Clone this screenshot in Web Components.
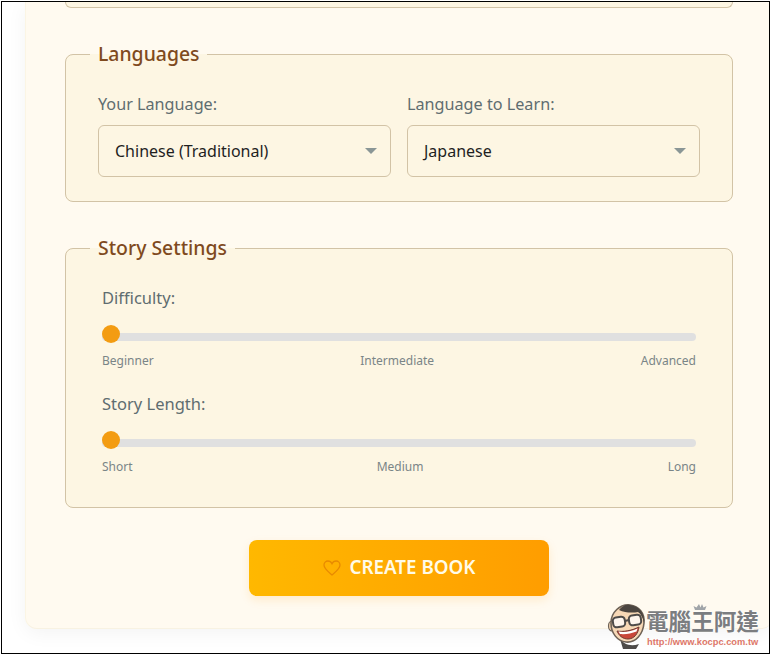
<!DOCTYPE html>
<html>
<head>
<meta charset="utf-8">
<title>Create Book</title>
<style>
  html, body { margin: 0; height: 100%; overflow: hidden; background: #fff; }
  body { font-family: "Noto Sans", sans-serif; padding: 1px; box-sizing: border-box; }
</style>
</head>
<body>
<book-page>
  <settings-group class="cut"></settings-group>
  <settings-group legend="Languages" columns>
    <language-select label="Your Language:" value="Chinese (Traditional)"></language-select>
    <language-select label="Language to Learn:" value="Japanese"></language-select>
  </settings-group>
  <settings-group legend="Story Settings" inset>
    <level-slider label="Difficulty:" a="Beginner" b="Intermediate" c="Advanced"></level-slider>
    <level-slider label="Story Length:" a="Short" b="Medium" c="Long"></level-slider>
  </settings-group>
  <create-button slot="action">CREATE BOOK</create-button>
</book-page>
<site-mark></site-mark>

<script>
class BookPage extends HTMLElement {
  constructor() {
    super();
    const shadow = this.attachShadow({mode: "open"});
    shadow.innerHTML = `
      <style>
        :host {
          display: block;
          box-sizing: border-box;
          width: 769px;
          height: 653px;
          border: 1px solid #000;
          padding-left: 23px;
          overflow: hidden;
        }
        .card {
          box-sizing: border-box;
          width: 748px;
          height: 627px;
          padding: 0 40px 0 39px;
          background: #fffaf0;
          border-left: 1px solid #fbf5e4;
          border-bottom: 1px solid #f8f2e2;
          border-radius: 0 0 12px 12px;
          box-shadow: 0 4px 20px rgba(0, 0, 0, .05);
          display: flex;
          flex-direction: column;
        }
        .groups { display: flex; flex-direction: column; }
        .action { display: flex; justify-content: center; width: 668px; }
      </style>
      <div class="card">
        <div class="groups"><slot></slot></div>
        <div class="action"><slot name="action"></slot></div>
      </div>
    `;
  }
}
customElements.define("book-page", BookPage);

class SettingsGroup extends HTMLElement {
  constructor() {
    super();
    const shadow = this.attachShadow({mode: "open"});
    const legend = this.getAttribute("legend");
    if (!legend) {
      // tail of the fieldset scrolled off the top
      shadow.innerHTML = `
        <style>
          :host {
            display: block;
            box-sizing: border-box;
            width: 668px;
            height: 6px;
            margin-bottom: 33px;
            background: #fdf6e3;
            border: 1px solid #d2c3a6;
            border-top: 0;
            border-radius: 0 0 8px 8px;
          }
        </style>
      `;
      return;
    }
    shadow.innerHTML = `
      <style>
        :host { display: block; width: 668px; margin-bottom: 33px; }
        :host([inset]) { margin-bottom: 32px; }
        fieldset {
          margin: 0;
          padding: 0;
          background: #fdf6e3;
          border: 1px solid #d2c3a6;
          border-radius: 8px;
          min-width: 0;
        }
        legend {
          margin-left: 24px;
          padding: 0 8px 2px;
          font-size: 19.4px;
          font-weight: 500;
          line-height: 25px;
          color: #7f4a1e;
        }
        .body { padding: 25px 32px 24px; }
        :host([columns]) .body { display: grid; grid-template-columns: 1fr 1fr; gap: 16px; }
        :host([inset]) .body { padding: 25px 36px 32px; }
      </style>
      <fieldset>
        <legend>${legend}</legend>
        <div class="body"><slot></slot></div>
      </fieldset>
    `;
  }
}
customElements.define("settings-group", SettingsGroup);

class LanguageSelect extends HTMLElement {
  constructor() {
    super();
    const shadow = this.attachShadow({mode: "open"});
    shadow.innerHTML = `
      <style>
        :host { display: block; }
        .label {
          font-size: 16.2px;
          line-height: 22px;
          color: #5f6d70;
          margin-bottom: 10px;
        }
        .box {
          box-sizing: border-box;
          height: 52px;
          padding: 0 13px 0 16px;
          display: flex;
          align-items: center;
          justify-content: space-between;
          border: 1px solid #d2c3a6;
          border-radius: 6px;
          background: #fdf6e3;
          color: #1f1f1f;
          font-size: 16px;
        }
        svg { display: block; margin-top: -1px; }
      </style>
      <div class="label">${this.getAttribute("label")}</div>
      <div class="box" role="combobox">
        <span>${this.getAttribute("value")}</span>
        <svg width="12" height="6" viewBox="0 0 12 6"><path d="M0 0h12L6 6z" fill="#8a9696"/></svg>
      </div>
    `;
  }
}
customElements.define("language-select", LanguageSelect);

class LevelSlider extends HTMLElement {
  constructor() {
    super();
    const shadow = this.attachShadow({mode: "open"});
    shadow.innerHTML = `
      <style>
        :host { display: block; margin-bottom: 24px; }
        :host(:last-child) { margin-bottom: 0; }
        .label { font-size: 16.5px; line-height: 22px; color: #5f6d70; }
        .track {
          position: relative;
          height: 8px;
          margin-top: 24px;
          border-radius: 4px;
          background: #e0e0e0;
        }
        .thumb {
          position: absolute;
          left: 0;
          top: -8px;
          width: 18px;
          height: 18px;
          border-radius: 50%;
          background: #f39c12;
        }
        .marks {
          display: flex;
          justify-content: space-between;
          margin-top: 12px;
          font-size: 12px;
          line-height: 16px;
          color: #7a8587;
        }
      </style>
      <div class="label">${this.getAttribute("label")}</div>
      <div class="track"><div class="thumb"></div></div>
      <div class="marks">
        <span>${this.getAttribute("a")}</span>
        <span>${this.getAttribute("b")}</span>
        <span>${this.getAttribute("c")}</span>
      </div>
    `;
  }
}
customElements.define("level-slider", LevelSlider);

class CreateButton extends HTMLElement {
  constructor() {
    super();
    const shadow = this.attachShadow({mode: "open"});
    shadow.innerHTML = `
      <style>
        :host { display: block; }
        button {
          box-sizing: border-box;
          width: 300px;
          height: 56px;
          display: flex;
          align-items: center;
          justify-content: center;
          gap: 9px;
          padding: 0 0 2px;
          border: 0;
          border-radius: 8px;
          background: linear-gradient(90deg, #ffb800, #ff9d00);
          box-shadow: 0 4px 10px rgba(255, 152, 0, .15);
          color: #fffbe8;
          font: 600 18.8px "Noto Sans", sans-serif;
        }
        svg { display: block; margin-top: 2px; }
      </style>
      <button>
        <svg width="18" height="16" viewBox="0 0 18 16" fill="none" stroke="#e88a00" stroke-width="1.3">
          <path d="M9 15C5 11.6 1 8.8 1 5.1 1 2.7 2.8 1 4.900 1 6.600 1 8.200 2 9 3.700 9.800 2 11.400 1 13.100 1 15.200 1 17 2.700 17 5.100 17 8.800 13 11.600 9 15Z"/>
        </svg>
        <span><slot></slot></span>
      </button>
    `;
  }
}
customElements.define("create-button", CreateButton);

class SiteMark extends HTMLElement {
  constructor() {
    super();
    const shadow = this.attachShadow({mode: "open"});
    shadow.innerHTML = `
      <style>
        :host { position: absolute; left: 606px; top: 601px; width: 160px; height: 50px; }
        svg { position: absolute; left: 0; top: 0; }
        .name {
          position: absolute;
          left: 40px;
          top: 7px;
          font: 700 22.6px/26px "Noto Sans CJK TC", sans-serif;
          color: #7b7d80;
          text-shadow: 0 0 2px #fff, 0 0 2px #fff;
          white-space: nowrap;
        }
        .url {
          position: absolute;
          left: 41px;
          top: 35px;
          font: 700 9.3px/12px "Liberation Sans", sans-serif;
          color: #dd7768;
          text-shadow: 0 0 2px #fff;
          white-space: nowrap;
        }
      </style>
      <svg width="154" height="48" viewBox="0 0 154 48">
        <!-- crown over the third character -->
        <path d="M89 9l-1.500-4 3 1.500L93 3l1.500 3.500 1.500-3.500 1.500 3.500 3-1.500L99 9z" fill="#a0a4a8"/>
        <!-- collar -->
        <path d="M14 38c4 5 10 8 19 5l-3 5H17z" fill="#4e4b49"/>
        <!-- ear, head -->
        <ellipse cx="6" cy="25" rx="3.500" ry="5" fill="#f5d6b3" stroke="#6e6256" stroke-width="1.200"/>
        <path d="M5 22C5 11 14 3 24 4c9 1 15 8 14 18-1 11-8 20-18 19C11 40 5 32 5 22Z" fill="#f7d8b6" stroke="#6e6256" stroke-width="1.600"/>
        <!-- hair -->
        <path d="M13 9c3-4 7-6 11-5 9 1 15 8 14 18-1-5-3-9-6-11-5 1-13 1-19-2Z" fill="#4b4540"/>
        <!-- glasses -->
        <g fill="#fff" fill-opacity=".75" stroke="#4e4b49" stroke-width="2">
          <rect x="7" y="16" width="12" height="10" rx="3.500" transform="rotate(-8 13 21)"/>
          <rect x="23" y="14" width="12" height="10" rx="3.500" transform="rotate(-8 29 19)"/>
        </g>
        <path d="M19 20l4-1" stroke="#4e4b49" stroke-width="2"/>
        <!-- mouth -->
        <path d="M11 30c6 1 14 0 22-4-1 7-5 12-11 12-5 0-9-3-11-8Z" fill="#c9473a" stroke="#6e3b33"/>
        <path d="M12.500 30.500c6 1 13 0 19-3l-1 3c-5 2-11 3-16.500 2.500Z" fill="#fff"/>
      </svg>
      <div class="name">電腦王阿達</div>
      <div class="url">http://www.kocpc.com.tw</div>
    `;
  }
}
customElements.define("site-mark", SiteMark);
</script>
</body>
</html>
